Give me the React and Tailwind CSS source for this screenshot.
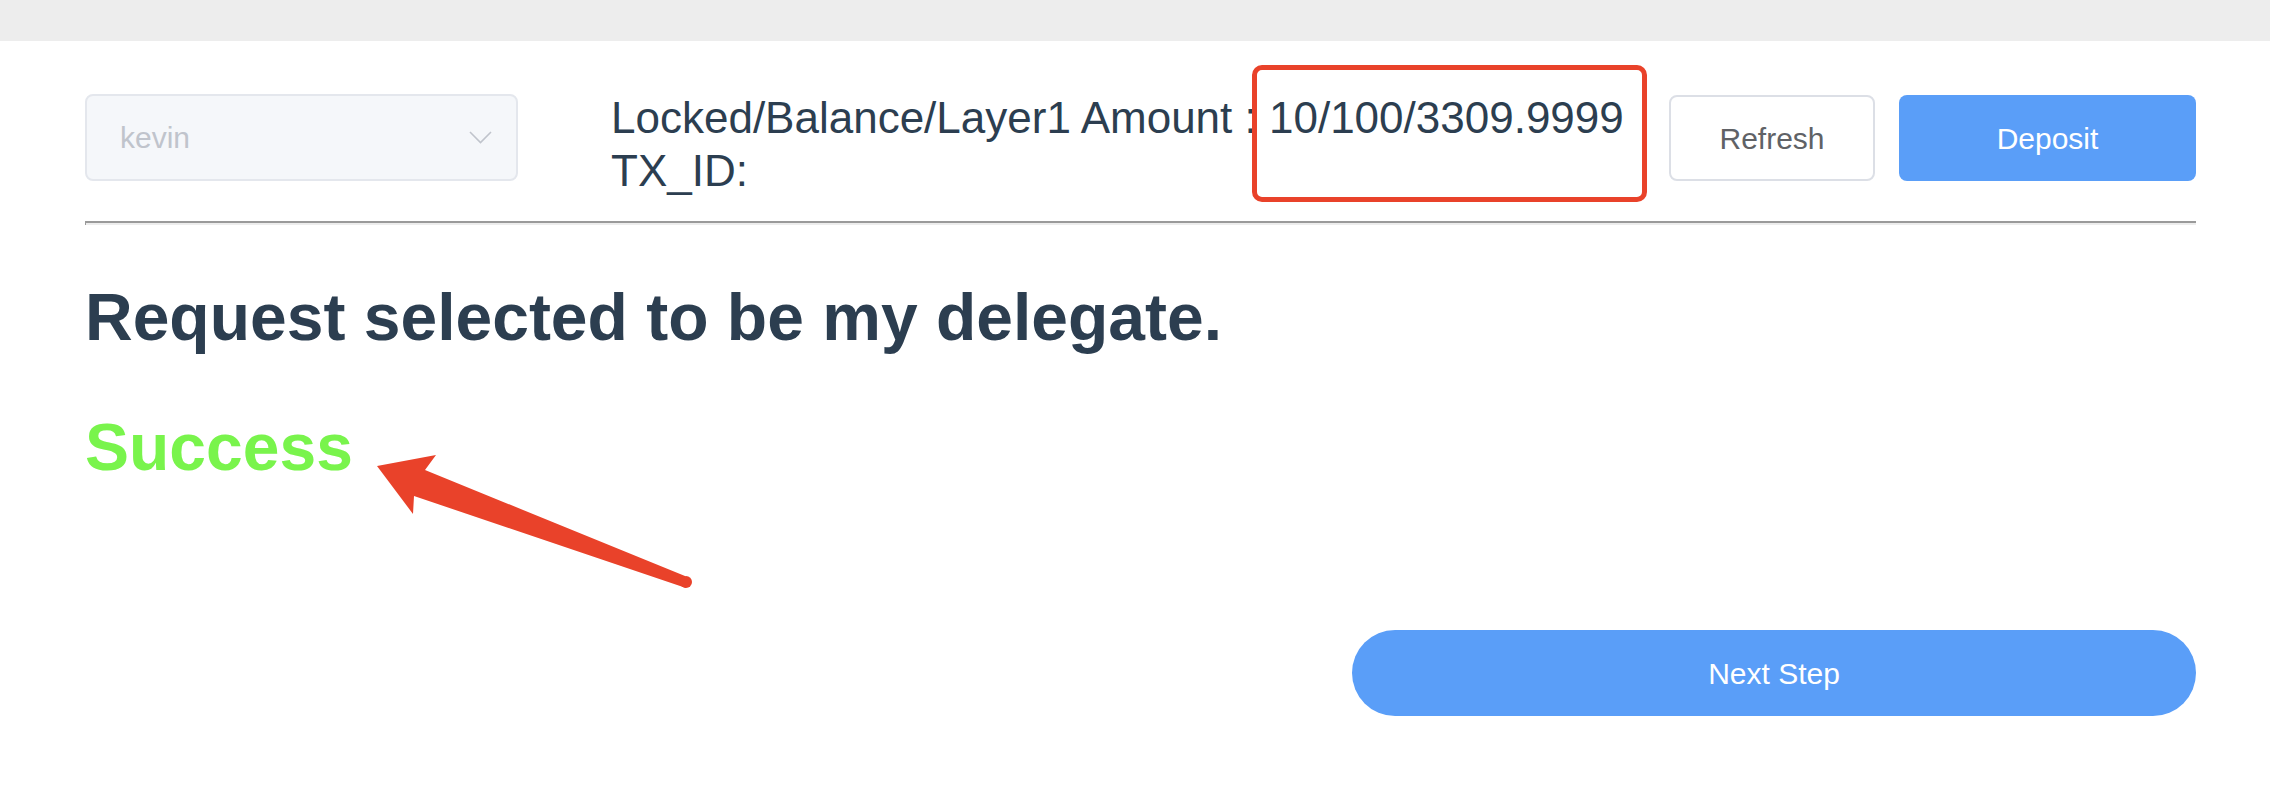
export default function App() {
  return (
    <div className="relative min-h-screen w-full bg-white font-['Liberation_Sans',Arial,sans-serif] text-[#2c3e50]">
      {/* browser chrome strip */}
      <div className="h-[41px] bg-[#ededed]" />

      <div className="pl-[85px] pr-[74px]">
        {/* top row: account select, amounts, actions */}
        <div className="flex items-start pt-[53px]">
          <div className="flex h-[87px] w-[433px] shrink-0 items-center justify-between rounded-[8px] border-2 border-[#e4e7ed] bg-[#f5f7fa] pl-[33px] pr-[24px]">
            <span className="text-[30px] leading-none text-[#c0c4cc]">kevin</span>
            <svg width="23" height="13" viewBox="0 0 23 13" fill="none">
              <path d="M1 1 L11.5 11.5 L22 1" stroke="#c0c4cc" strokeWidth="1.6" />
            </svg>
          </div>

          <div className="ml-[93px] mt-[-3px] whitespace-nowrap text-[44px] leading-[53px]">
            <div>Locked/Balance/Layer1 Amount : 10/100/3309.9999</div>
            <div>TX_ID:</div>
          </div>

          <div className="ml-auto mt-[1px] flex gap-[24px]">
            <button className="h-[86px] w-[206px] rounded-[8px] border-2 border-[#dcdfe6] bg-white text-[30px] text-[#606266]">
              Refresh
            </button>
            <button className="h-[86px] w-[297px] rounded-[8px] bg-[#5a9ef8] text-[30px] text-white">
              Deposit
            </button>
          </div>
        </div>

        <div className="mt-[24px] h-[4px] border-l border-t-2 border-[#9a9a9a] bg-[#ededed]" />

        <h2 className="mt-[59px] text-[66px] font-bold leading-none">Request selected to be my delegate.</h2>

        <h2 className="mt-[64px] text-[66px] font-bold leading-none text-[#79f44c]">Success</h2>

        <div className="mt-[150px] flex justify-end">
          <button className="h-[86px] w-[844px] rounded-full bg-[#5a9ef8] text-[30px] text-white">Next Step</button>
        </div>
      </div>

      {/* screenshot annotations */}
      <div className="pointer-events-none absolute left-[1252px] top-[65px] h-[137px] w-[395px] rounded-[10px] border-[5px] border-[#e9422a]" />
      <svg className="pointer-events-none absolute left-0 top-0" width="2270" height="806">
        <polygon
          points="377,466 436,455 425,470 685,576 686,588 414,496 413,514"
          fill="#e9422a"
        />
        <circle cx="686" cy="582" r="6" fill="#e9422a" />
      </svg>
    </div>
  );
}
